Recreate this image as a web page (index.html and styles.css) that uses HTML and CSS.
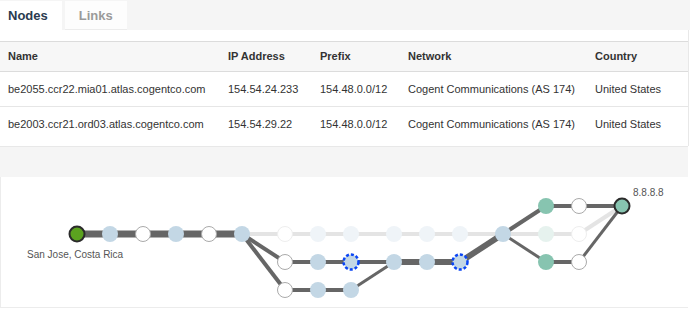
FILE: index.html
```html
<!DOCTYPE html>
<html lang="en">
<head>
  <meta charset="UTF-8" />
  <title>Traceroute</title>
  <link rel="stylesheet" href="styles.css">
</head>
<body>
  <div class="tabs">
    <div class="tab active">Nodes</div>
    <div class="tab">Links</div>
  </div>

  <div class="content">
    <table class="nodes">
      <colgroup>
        <col style="width:220px"><col style="width:92px"><col style="width:88px"><col style="width:187px"><col>
      </colgroup>
      <thead>
        <tr><th>Name</th><th>IP Address</th><th>Prefix</th><th>Network</th><th>Country</th></tr>
      </thead>
      <tbody>
        <tr><td>be2055.ccr22.mia01.atlas.cogentco.com</td><td>154.54.24.233</td><td>154.48.0.0/12</td><td>Cogent Communications (AS 174)</td><td>United States</td></tr>
        <tr><td>be2003.ccr21.ord03.atlas.cogentco.com</td><td>154.54.29.22</td><td>154.48.0.0/12</td><td>Cogent Communications (AS 174)</td><td>United States</td></tr>
      </tbody>
    </table>
  </div>

  <div class="band"></div>

  <div class="graph">
    <svg width="688" height="130" viewBox="0 0 688 130">
      <!-- faded path -->
      <g class="edge faded">
        <line x1="242" y1="57" x2="579" y2="57" stroke-width="4"/>
        <line x1="579" y1="57" x2="622" y2="29" stroke-width="4"/>
      </g>
      <!-- active paths -->
      <g class="edge">
        <line x1="77" y1="57" x2="242" y2="57" stroke-width="7"/>
        <line x1="242" y1="57" x2="285" y2="85" stroke-width="4"/>
        <line x1="242" y1="57" x2="285" y2="113" stroke-width="4"/>
        <line x1="285" y1="85" x2="394" y2="85" stroke-width="4"/>
        <line x1="394" y1="85" x2="460" y2="85" stroke-width="6"/>
        <line x1="285" y1="113" x2="351" y2="113" stroke-width="4"/>
        <line x1="351" y1="113" x2="394" y2="85" stroke-width="3"/>
        <line x1="460" y1="85" x2="503" y2="57" stroke-width="6"/>
        <line x1="503" y1="57" x2="546" y2="29" stroke-width="4"/>
        <line x1="546" y1="29" x2="622" y2="29" stroke-width="4"/>
        <line x1="503" y1="57" x2="546" y2="85" stroke-width="3"/>
        <line x1="546" y1="85" x2="579" y2="85" stroke-width="4"/>
        <line x1="579" y1="85" x2="622" y2="29" stroke-width="3"/>
      </g>

      <!-- faded nodes -->
      <circle class="n-white faded" cx="285" cy="57" r="7.5"/>
      <circle class="n-blue faded" cx="318" cy="57" r="8"/>
      <circle class="n-blue faded" cx="351" cy="57" r="8"/>
      <circle class="n-blue faded" cx="394" cy="57" r="8"/>
      <circle class="n-blue faded" cx="427" cy="57" r="8"/>
      <circle class="n-blue faded" cx="460" cy="57" r="8"/>
      <circle class="n-green faded" cx="546" cy="57" r="8"/>
      <circle class="n-white faded" cx="579" cy="57" r="7.5"/>

      <!-- main row -->
      <circle class="n-source" cx="77" cy="57" r="7.5"/>
      <circle class="n-blue" cx="110" cy="57" r="8"/>
      <circle class="n-white" cx="143" cy="57" r="7.5"/>
      <circle class="n-blue" cx="176" cy="57" r="8"/>
      <circle class="n-white" cx="209" cy="57" r="7.5"/>
      <circle class="n-blue" cx="242" cy="57" r="8"/>
      <circle class="n-blue" cx="503" cy="57" r="8"/>

      <circle class="n-white" cx="285" cy="85" r="7.5"/>
      <circle class="n-blue" cx="318" cy="85" r="8"/>
      <circle class="n-blue n-dash" cx="351" cy="85" r="7.5"/>
      <circle class="n-blue" cx="394" cy="85" r="8"/>
      <circle class="n-blue" cx="427" cy="85" r="8"/>
      <circle class="n-blue n-dash" cx="460" cy="85" r="7.5"/>

      <circle class="n-white" cx="285" cy="113" r="7.5"/>
      <circle class="n-blue" cx="318" cy="113" r="8"/>
      <circle class="n-blue" cx="351" cy="113" r="8"/>

      <circle class="n-green" cx="546" cy="29" r="8"/>
      <circle class="n-white" cx="579" cy="29" r="7.5"/>
      <circle class="n-green" cx="546" cy="85" r="8"/>
      <circle class="n-white" cx="579" cy="85" r="7.5"/>
      <circle class="n-target" cx="622" cy="29" r="7.5"/>

      <text class="label" x="27" y="81">San Jose, Costa Rica</text>
      <text class="label" x="633" y="19">8.8.8.8</text>
    </svg>
  </div>
</body>
</html>
```

FILE: styles.css
```css
body {
  margin: 0;
  font-family: "Liberation Sans", Arial, sans-serif;
  color: #333;
  background: #fff;
  width: 690px;
}
.tabs {
  display: flex;
  gap: 3px;
  height: 30px;
  background: #f5f5f5;
  padding-top: 1px;
  box-sizing: border-box;
}
.tab {
  padding: 0 14px;
  line-height: 29px;
  font-size: 13px;
  font-weight: bold;
  color: #9a9a9a;
  background: #fdfdfd;
  border-bottom: 1px solid #ececec;
  box-sizing: border-box;
  height: 29px;
}
.tab.active {
  padding-left: 8px;
  color: #2a3b4f;
  background: #fff;
  border-bottom: none;
}
.content {
  padding: 11px 0 5px;
  border-right: 1px solid #e8e8e8;
  width: 688px;
}
.nodes {
  width: 100%;
  table-layout: fixed;
  border-collapse: collapse;
  font-size: 11px;
}
.nodes th, .nodes td {
  text-align: left;
  white-space: nowrap;
  padding: 0 8px;
  line-height: 13px;
}
.nodes th {
  height: 29px;
  font-weight: bold;
  background: #f7f7f7;
  border-top: 1px solid #dcdcdc;
  border-bottom: 1px solid #dcdcdc;
}
.nodes td {
  height: 34px;
  border-bottom: 1px solid #e6e6e6;
}
.nodes tr:last-child td {
  border-bottom: none;
}
.band {
  height: 30px;
  background: #f5f5f5;
  border-top: 1px solid #e8e8e8;
  width: 688px;
}
.graph {
  width: 687px;
  height: 130px;
  border-left: 1px solid #ececec;
  border-bottom: 1px solid #ececec;
}
.graph svg {
  display: block;
  margin-left: -1px;
}
.edge line {
  stroke: #666;
  stroke-linecap: butt;
}
.edge.faded line {
  stroke: #e4e4e4;
}
.n-white {
  fill: #fff;
  stroke: #aaa;
  stroke-width: 1;
}
.n-white.faded {
  stroke: #eee;
}
.n-blue {
  fill: #c3d7e5;
}
.n-blue.faded {
  fill: #eff4f8;
}
.n-green {
  fill: #87c4b0;
}
.n-green.faded {
  fill: #e6f2ee;
}
.n-dash {
  stroke: #0a45f5;
  stroke-width: 2.5;
  stroke-dasharray: 3 2;
}
.n-source {
  fill: #5ba21f;
  stroke: #2b2b2b;
  stroke-width: 2;
}
.n-target {
  fill: #87c4b0;
  stroke: #2b2b2b;
  stroke-width: 2;
}
.label {
  font-family: "Liberation Sans", Arial, sans-serif;
  font-size: 10px;
  fill: #555;
}
```
